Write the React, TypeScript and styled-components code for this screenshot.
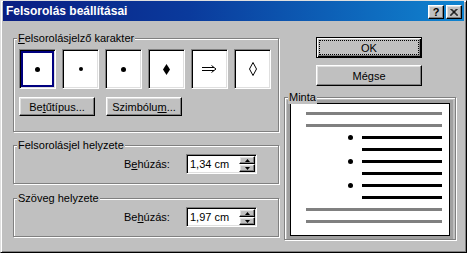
import React from "react";
import styled, { createGlobalStyle, css } from "styled-components";

const GlobalStyle = createGlobalStyle`
  html, body { margin: 0; padding: 0; background: #c0c0c0; }
  body {
    font-family: "Liberation Sans", Arial, sans-serif;
    font-size: 11px;
    color: #000;
  }
  * { box-sizing: border-box; }
`;

const raised = css`
  border: 1px solid;
  border-color: #fff #000 #000 #fff;
  box-shadow: inset -1px -1px 0 #808080, inset 1px 1px 0 #dfdfdf;
`;

const sunken = css`
  border: 1px solid;
  border-color: #808080 #fff #fff #808080;
  box-shadow: inset 1px 1px 0 #000, inset -1px -1px 0 #dfdfdf;
`;

const Window = styled.div`
  width: 467px;
  height: 253px;
  background: #c0c0c0;
  border: 1px solid;
  border-color: #dfdfdf #000 #000 #dfdfdf;
  box-shadow: inset 1px 1px 0 #fff, inset -1px -1px 0 #808080;
  padding: 0 2px 2px 2px;
  display: flex;
  flex-direction: column;
`;

const TitleBar = styled.div`
  height: 20px;
  display: flex;
  align-items: flex-start;
  justify-content: space-between;
  padding: 0 2px 0 3px;
  background: linear-gradient(90deg, #0a1e82 0%, #0a3a9c 40%, #1084d0 100%);
`;

const TitleText = styled.span`
  color: #fff;
  font-weight: bold;
  font-size: 12px;
  line-height: 20px;
`;

const CaptionButtons = styled.div`
  display: flex;
  gap: 2px;
  margin-top: 4px;
`;

const CaptionButton = styled.div`
  width: 16px;
  height: 14px;
  background: #c0c0c0;
  ${raised}
  display: flex;
  align-items: center;
  justify-content: center;
  font-weight: bold;
  font-size: 11px;
  line-height: 12px;
`;

const Body = styled.div`
  flex: 1;
  display: flex;
  padding-left: 10px;
`;

const LeftColumn = styled.div`
  width: 266px;
  display: flex;
  flex-direction: column;
  padding-top: 17px;
`;

const RightColumn = styled.div`
  width: 172px;
  margin-left: 5px;
  display: flex;
  flex-direction: column;
  padding-top: 16px;
`;

const GroupBox = styled.div<{ $gap?: number; $pad: string }>`
  position: relative;
  margin-top: ${(p) => p.$gap ?? 0}px;
  padding: ${(p) => p.$pad};
  border: 1px solid #808080;
  box-shadow: inset 1px 1px 0 #fff, 1px 1px 0 #fff;
`;

const GroupLabel = styled.span`
  position: absolute;
  top: -7px;
  left: 3px;
  padding: 0 1px;
  line-height: 13px;
  background: #c0c0c0;
  white-space: nowrap;
`;

const Key = styled.span`
  text-decoration: underline;
`;

const SymbolRow = styled.div`
  display: flex;
  gap: 6px;
`;

const SymbolBox = styled.div<{ $selected?: boolean }>`
  width: 37px;
  height: 40px;
  background: #fff;
  ${sunken}
  display: flex;
  align-items: center;
  justify-content: center;
  ${(p) =>
    p.$selected &&
    css`
      box-shadow: inset 1px 1px 0 #000, inset -1px -1px 0 #dfdfdf,
        inset 0 0 0 3px #000080;
    `}
`;

const Dot = styled.span<{ $size: number }>`
  width: ${(p) => p.$size}px;
  height: ${(p) => p.$size}px;
  border-radius: 50%;
  background: #000;
`;

const ButtonRow = styled.div`
  display: flex;
  gap: 11px;
  margin-top: 8px;
`;

const PushButton = styled.div<{ $w: number; $h: number }>`
  width: ${(p) => p.$w}px;
  height: ${(p) => p.$h}px;
  background: #c0c0c0;
  ${raised}
  display: flex;
  align-items: center;
  justify-content: center;
  white-space: nowrap;
`;

const DefaultButton = styled(PushButton)`
  position: relative;
  border: 1px solid #000;
  box-shadow: inset 1px 1px 0 #fff, inset -1px -1px 0 #000,
    inset -2px -2px 0 #808080;

  &::after {
    content: "";
    position: absolute;
    inset: 2px;
    border: 1px dotted #000;
  }
`;

const FieldRow = styled.div`
  display: flex;
  align-items: center;
  padding-left: 110px;
`;

const FieldLabel = styled.span`
  width: 62px;
`;

const SpinInput = styled.div`
  width: 71px;
  height: 20px;
  background: #fff;
  ${sunken}
  display: flex;
  align-items: center;
  justify-content: space-between;
  padding: 1px 1px 1px 3px;
`;

const SpinButtons = styled.div`
  display: flex;
  flex-direction: column;
`;

const SpinButton = styled.div`
  width: 16px;
  height: 8px;
  background: #c0c0c0;
  ${raised}
  display: flex;
  align-items: center;
  justify-content: center;
`;

const PreviewFrame = styled.div`
  padding: 3px;
  background: #a0a0a0;
`;

const PreviewPage = styled.div`
  height: 133px;
  background: #fff;
  border: 1px solid #000;
  padding: 8px 7px 0 15px;
  display: flex;
  flex-direction: column;
`;

const PreviewRow = styled.div`
  height: 12px;
  display: flex;
  justify-content: flex-end;
  align-items: flex-start;
`;

const PreviewLine = styled.div<{ $gray?: boolean }>`
  height: 3px;
  width: ${(p) => (p.$gray ? "100%" : "80px")};
  background: ${(p) => (p.$gray ? "#808080" : "#000")};
`;

const PreviewBullet = styled.span`
  width: 5px;
  height: 5px;
  margin: -1px 9px 0 0;
  border-radius: 50%;
  background: #000;
`;

const Arrow = ({ up }: { up?: boolean }) => (
  <svg width="5" height="3" viewBox="0 0 5 3">
    <polygon points={up ? "2.5,0 5,3 0,3" : "0,0 5,0 2.5,3"} fill="#000" />
  </svg>
);

const previewRows: { gray?: boolean; bullet?: boolean }[] = [
  { gray: true },
  { gray: true },
  { bullet: true },
  {},
  { bullet: true },
  {},
  { bullet: true },
  {},
  { gray: true },
  { gray: true },
];

export default function App() {
  return (
    <>
      <GlobalStyle />
      <Window>
        <TitleBar>
          <TitleText>Felsorolás beállításai</TitleText>
          <CaptionButtons>
            <CaptionButton>?</CaptionButton>
            <CaptionButton>
              <svg width="8" height="7" viewBox="0 0 8 7">
                <path d="M0.5 0 L7.5 7 M1.5 0 L8 6.5 M7.5 0 L0.5 7 M6.5 0 L0 6.5" stroke="#000" strokeWidth="1" />
              </svg>
            </CaptionButton>
          </CaptionButtons>
        </TitleBar>
        <Body>
          <LeftColumn>
            <GroupBox $pad="10px 5px 15px 5px">
              <GroupLabel>
                <Key>F</Key>elsorolásjelző karakter
              </GroupLabel>
              <SymbolRow>
                <SymbolBox $selected>
                  <Dot $size={5} />
                </SymbolBox>
                <SymbolBox>
                  <Dot $size={4} />
                </SymbolBox>
                <SymbolBox>
                  <Dot $size={5} />
                </SymbolBox>
                <SymbolBox>
                  <svg width="7" height="11" viewBox="0 0 7 11">
                    <polygon points="3.5,0 7,5.5 3.5,11 0,5.5" fill="#000" />
                  </svg>
                </SymbolBox>
                <SymbolBox>
                  <svg width="15" height="8" viewBox="0 0 15 8">
                    <path d="M0 2.5 H12 M0 5.5 H12 M9.5 0.5 L14 4 L9.5 7.5" stroke="#000" strokeWidth="1" fill="none" />
                  </svg>
                </SymbolBox>
                <SymbolBox>
                  <svg width="8" height="14" viewBox="0 0 8 14">
                    <polygon points="4,0.5 7.5,7 4,13.5 0.5,7" stroke="#000" strokeWidth="1" fill="none" />
                  </svg>
                </SymbolBox>
              </SymbolRow>
              <ButtonRow>
                <PushButton $w={76} $h={19}>
                  Be<Key>t</Key>űtípus...
                </PushButton>
                <PushButton $w={76} $h={19}>
                  Szimbólu<Key>m</Key>...
                </PushButton>
              </ButtonRow>
            </GroupBox>

            <GroupBox $gap={13} $pad="8px 5px 9px 0">
              <GroupLabel>Felsorolásjel helyzete</GroupLabel>
              <FieldRow>
                <FieldLabel>
                  B<Key>e</Key>húzás:
                </FieldLabel>
                <SpinInput>
                  <span>1,34 cm</span>
                  <SpinButtons>
                    <SpinButton>
                      <Arrow up />
                    </SpinButton>
                    <SpinButton>
                      <Arrow />
                    </SpinButton>
                  </SpinButtons>
                </SpinInput>
              </FieldRow>
            </GroupBox>

            <GroupBox $gap={14} $pad="8px 5px 9px 0">
              <GroupLabel>Szöveg helyzete</GroupLabel>
              <FieldRow>
                <FieldLabel>
                  Be<Key>h</Key>úzás:
                </FieldLabel>
                <SpinInput>
                  <span>1,97 cm</span>
                  <SpinButtons>
                    <SpinButton>
                      <Arrow up />
                    </SpinButton>
                    <SpinButton>
                      <Arrow />
                    </SpinButton>
                  </SpinButtons>
                </SpinInput>
              </FieldRow>
            </GroupBox>
          </LeftColumn>

          <RightColumn>
            <DefaultButton $w={106} $h={21} style={{ marginLeft: 32 }}>
              OK
            </DefaultButton>
            <PushButton $w={106} $h={21} style={{ marginLeft: 32, marginTop: 7 }}>
              Mégse
            </PushButton>
            <GroupBox $gap={11} $pad="2px 2px 0 2px">
              <GroupLabel>Minta</GroupLabel>
              <PreviewFrame>
                <PreviewPage>
                  {previewRows.map((r, i) => (
                    <PreviewRow key={i}>
                      {r.bullet && <PreviewBullet />}
                      <PreviewLine $gray={r.gray} />
                    </PreviewRow>
                  ))}
                </PreviewPage>
              </PreviewFrame>
            </GroupBox>
          </RightColumn>
        </Body>
      </Window>
    </>
  );
}
